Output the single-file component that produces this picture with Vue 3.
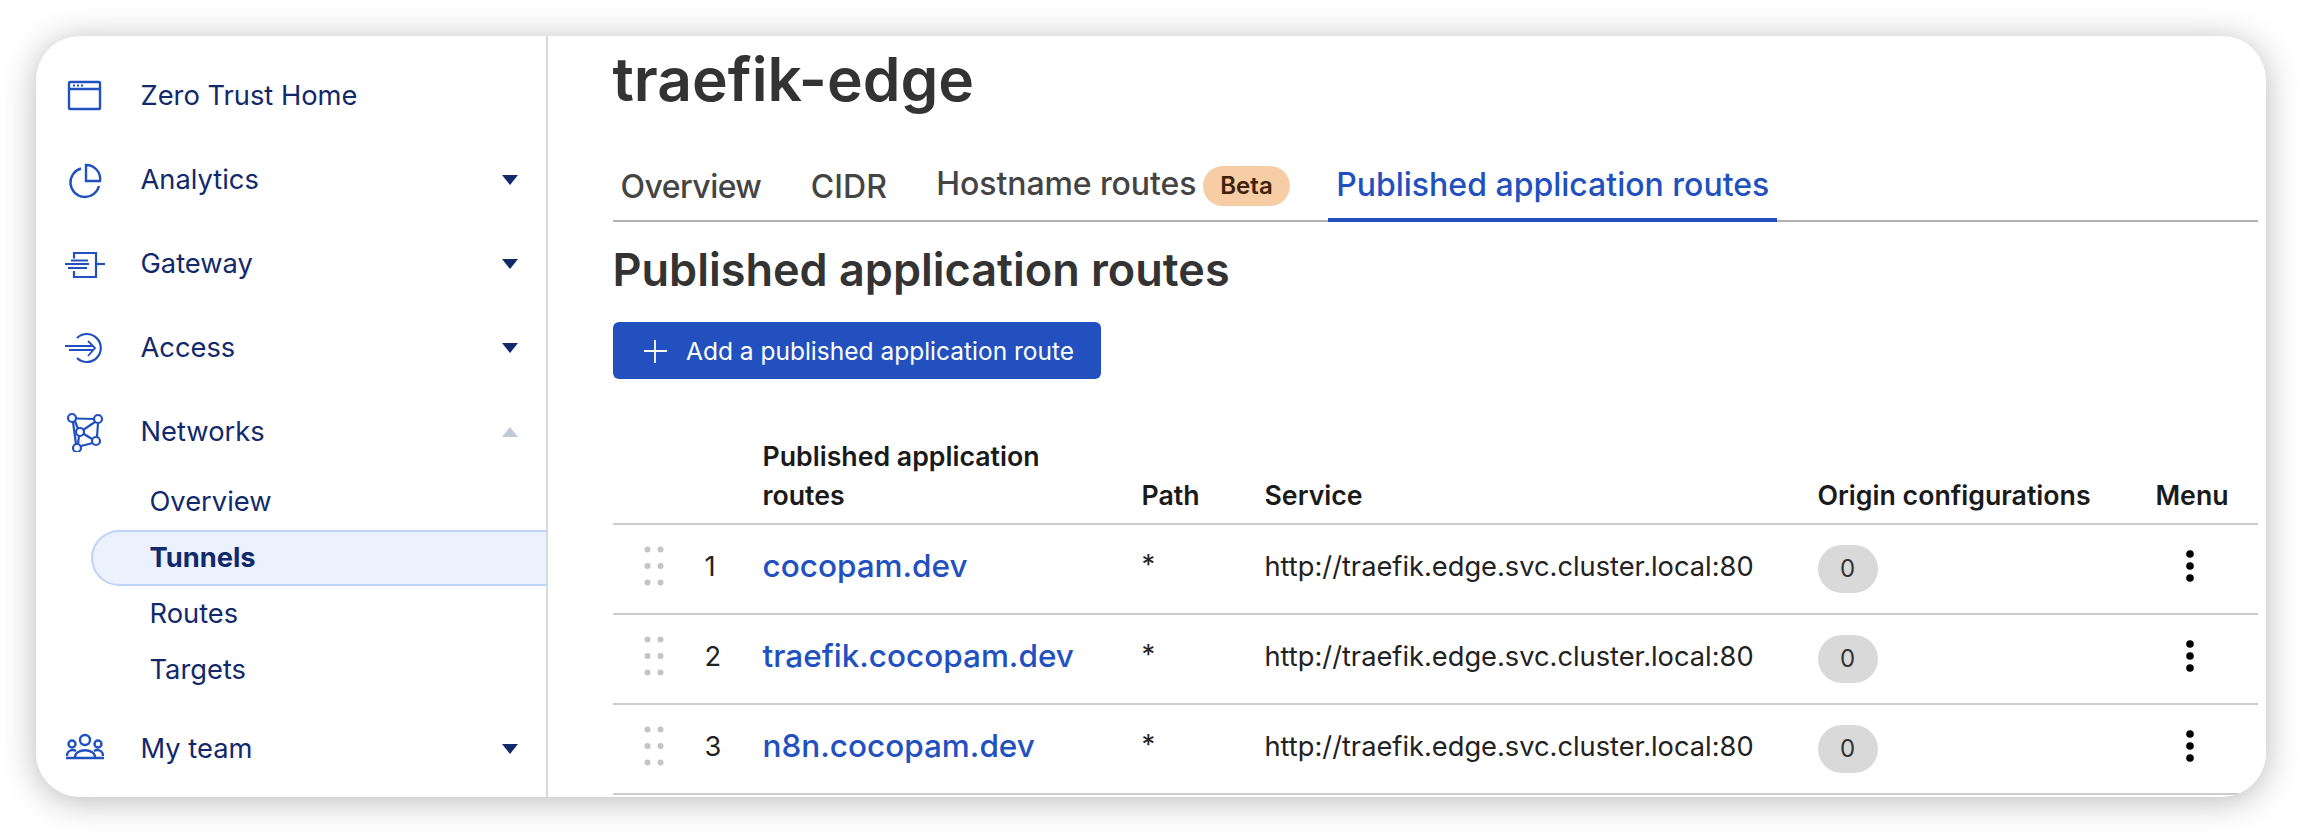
<script setup>
const routes = [
  { n: 1, host: 'cocopam.dev' },
  { n: 2, host: 'traefik.cocopam.dev' },
  { n: 3, host: 'n8n.cocopam.dev' }
]
const service = 'http://traefik.edge.svc.cluster.local:80'
</script>

<template>
  <div class="stage">
    <div class="card">
      <aside class="sidebar">
        <div class="nav-item">
          <svg class="nav-icon" viewBox="0 0 40 40" fill="none" stroke="currentColor" stroke-width="2.4"><rect x="4" y="6" width="31" height="27" rx="1"/><path d="M4 13h31"/><path d="M8 9.6h2M12 9.6h2M16 9.6h2" stroke-width="2"/></svg>
          <span>Zero Trust Home</span>
        </div>
        <div class="nav-item">
          <svg class="nav-icon" viewBox="0 0 40 40" fill="none" stroke="currentColor" stroke-width="2.4"><path d="M16 8.5A14.5 14.5 0 1 0 34 26"/><path d="M21 5a14 14 0 0 1 14 16H21z"/></svg>
          <span>Analytics</span><i class="caret"></i>
        </div>
        <div class="nav-item">
          <svg class="nav-icon" viewBox="0 0 40 40" fill="none" stroke="currentColor" stroke-width="2.2"><path d="M9 14.500V9h22v24H9v-6"/><path d="M31 20h9"/><path d="M0 20h24M3 24h19M6 16.500h17" stroke-width="1.800"/></svg>
          <span>Gateway</span><i class="caret"></i>
        </div>
        <div class="nav-item">
          <svg class="nav-icon" viewBox="0 0 40 40" fill="none" stroke="currentColor" stroke-width="2.2"><path d="M12 10a14 14 0 1 1 0 20"/><path d="M0 18h28M4 22h24M23 13l7 7-7 8" stroke-width="1.800"/></svg>
          <span>Access</span><i class="caret"></i>
        </div>
        <div class="nav-item">
          <svg class="nav-icon" viewBox="0 0 40 40" fill="none" stroke="currentColor" stroke-width="2.2"><circle cx="7" cy="6" r="4"/><circle cx="33" cy="7" r="4"/><circle cx="15" cy="20" r="4"/><circle cx="31" cy="29" r="4"/><circle cx="12" cy="36" r="4"/><path d="M11 6.500l18 .5M8 10l3 22M10 9l3 8M30 10l-12 8M33 11l-1 14M19 22l8 5M16 34l12-3M14 24l-1 8"/></svg>
          <span>Networks</span><i class="caret up"></i>
        </div>
        <div class="sub-list">
          <div class="sub-item">Overview</div>
          <div class="sub-item active">Tunnels</div>
          <div class="sub-item">Routes</div>
          <div class="sub-item">Targets</div>
        </div>
        <div class="nav-item">
          <svg class="nav-icon" viewBox="0 0 40 40" fill="none" stroke="currentColor" stroke-width="2.4"><circle cx="20" cy="11" r="5"/><circle cx="7" cy="15" r="3.500"/><circle cx="33" cy="15" r="3.500"/><path d="M1 29h38"/><path d="M10 28c0-9 20-9 20 0M2 27c0-6 6-7 9-5M38 27c0-6-6-7-9-5"/></svg>
          <span>My team</span><i class="caret"></i>
        </div>
      </aside>

      <main class="main">
        <h1 class="title">traefik-edge</h1>
        <nav class="tabs">
          <div class="tab first">Overview</div>
          <div class="tab">CIDR</div>
          <div class="tab raised">Hostname routes<span class="beta">Beta</span></div>
          <div class="tab current">Published application routes</div>
        </nav>
        <h2 class="section-title">Published application routes</h2>
        <button class="add-btn" type="button">
          <svg class="plus" viewBox="0 0 24 24" fill="none" stroke="currentColor" stroke-width="1.800"><path d="M12 1v23M1 12h23"/></svg>
          <span>Add a published application route</span>
        </button>

        <div class="row head">
          <div></div>
          <div>Published application routes</div>
          <div>Path</div>
          <div>Service</div>
          <div>Origin configurations</div>
          <div>Menu</div>
        </div>
        <div v-for="r in routes" :key="r.n" class="row body">
          <div class="lead">
            <svg class="grip" viewBox="0 0 20 40" fill="#c4c4c4"><circle cx="3.500" cy="3.500" r="3"/><circle cx="16.500" cy="3.500" r="3"/><circle cx="3.500" cy="20" r="3"/><circle cx="16.500" cy="20" r="3"/><circle cx="3.500" cy="36.500" r="3"/><circle cx="16.500" cy="36.500" r="3"/></svg>
            <span class="num">{{ r.n }}</span>
          </div>
          <a class="host">{{ r.host }}</a>
          <div class="path">*</div>
          <div class="svc">{{ service }}</div>
          <div><span class="count">0</span></div>
          <div class="menu">
            <svg class="kebab" viewBox="0 0 8 32" fill="#000"><circle cx="4" cy="4" r="3.800"/><circle cx="4" cy="16" r="3.800"/><circle cx="4" cy="28" r="3.800"/></svg>
          </div>
        </div>
      </main>
    </div>
  </div>
</template>

<style>
html, body { margin: 0; background: #fff; }
</style>

<style scoped>
.stage {
  width: 2302px;
  height: 832px;
  box-sizing: border-box;
  padding: 36px 36px 0;
  overflow: hidden;
  font-family: Inter, "Noto Sans", sans-serif;
}
.card {
  display: flex;
  width: 2230px;
  height: 761px;
  background: #fff;
  border-radius: 44px;
  overflow: hidden;
  box-shadow: 0 4px 34px rgba(0, 0, 0, 0.28);
}
.sidebar {
  flex: none;
  width: 510px;
  padding-top: 17.500px;
  border-right: 2px solid #d6d8dc;
  color: #12296b;
  font-size: 27.300px;
}
.nav-item {
  display: flex;
  align-items: center;
  height: 84px;
  padding: 0 28px 0 29px;
}
.nav-icon {
  flex: none;
  width: 40px;
  height: 40px;
  margin-right: 35.500px;
  color: #2251bf;
}
.caret {
  margin-left: auto;
  width: 0;
  height: 0;
  border-left: 8.500px solid transparent;
  border-right: 8.500px solid transparent;
  border-top: 10px solid #12296b;
}
.caret.up {
  border-top: 0;
  border-bottom: 10px solid #c2c9d6;
}
.sub-list {
  margin-bottom: 9px;
}
.sub-item {
  display: flex;
  align-items: center;
  height: 56px;
  margin-left: 55px;
  padding-left: 58.500px;
  box-sizing: border-box;
}
.sub-item.active {
  font-weight: 700;
  background: #ebf2fd;
  border: 2px solid #bdd3f9;
  border-right: 0;
  border-radius: 28px 0 0 28px;
  padding-left: 56.500px;
}
.main {
  flex: 1;
  min-width: 0;
  padding: 7px 8px 0 64.500px;
  color: #333;
}
.title {
  margin: 0;
  font-size: 60.500px;
  line-height: 72px;
  font-weight: 600;
  color: #333;
}
.tabs {
  display: flex;
  height: 107px;
  box-sizing: border-box;
  padding-top: 38px;
  border-bottom: 2px solid #b3b3b3;
  font-size: 32px;
  font-weight: 500;
  color: #444;
}
.tab {
  display: flex;
  align-items: center;
  box-sizing: border-box;
  height: 69px;
  padding: 0 8px 3px;
  margin-right: 33.500px;
  white-space: nowrap;
}
.tab.first {
  letter-spacing: -0.550px;
}
.tab.raised {
  padding-bottom: 9px;
  margin-right: 30.500px;
  letter-spacing: -0.100px;
}
.tab.current {
  color: #2251bf;
  margin-right: 0;
  height: 69px;
  border-bottom: 4px solid #2251bf;
}
.beta {
  margin: 6px 0 0 7px;
  padding: 0 17px;
  height: 40px;
  line-height: 40px;
  border-radius: 20px;
  background: #f6cda5;
  color: #3f2208;
  font-size: 24px;
  font-weight: 600;
  letter-spacing: 0;
}
.section-title {
  margin: 17px 0 0;
  font-size: 45px;
  line-height: 62px;
  font-weight: 600;
  color: #333;
}
.add-btn {
  display: flex;
  align-items: center;
  height: 57px;
  width: 488px;
  margin-top: 21px;
  padding: 0 0 0 30px;
  border: 0;
  border-radius: 6px;
  background: #2251bf;
  color: #fff;
  font: 400 24.500px Inter, sans-serif;
  white-space: nowrap;
}
.plus {
  width: 24px;
  height: 24px;
  margin-right: 19.500px;
}
.add-btn span {
  padding-top: 1px;
}
.row {
  display: grid;
  grid-template-columns: 150px 379px 123px 553px 338px 103px;
  border-bottom: 2px solid #ccc;
}
.row.head {
  margin-top: 39px;
  height: 106.500px;
  box-sizing: border-box;
  align-items: end;
  font-size: 26.700px;
  line-height: 39px;
  font-weight: 600;
  color: #1a1a1a;
}
.row.head > div {
  padding-bottom: 8px;
}
.row.head > div:nth-child(2) {
  max-width: 320px;
}
.row.body {
  height: 90px;
  box-sizing: border-box;
  padding-bottom: 4.500px;
  align-items: center;
  font-size: 27.250px;
  color: #222;
}
.lead {
  display: flex;
  align-items: center;
  padding-left: 31px;
}
.grip {
  width: 20px;
  height: 40px;
}
.num {
  margin-left: 41px;
}
.host {
  font-size: 31.500px;
  font-weight: 500;
  color: #2251bf;
  margin-top: -2px;
}
.path {
  margin-top: -4px;
}
.count {
  display: inline-flex;
  align-items: center;
  justify-content: center;
  width: 60px;
  height: 48px;
  margin-top: 5px;
  border-radius: 24px;
  background: #d9d9d9;
  color: #333;
  font-size: 24px;
}
.menu {
  display: flex;
  padding-left: 30.500px;
}
.kebab {
  width: 8px;
  height: 32px;
}
</style>
